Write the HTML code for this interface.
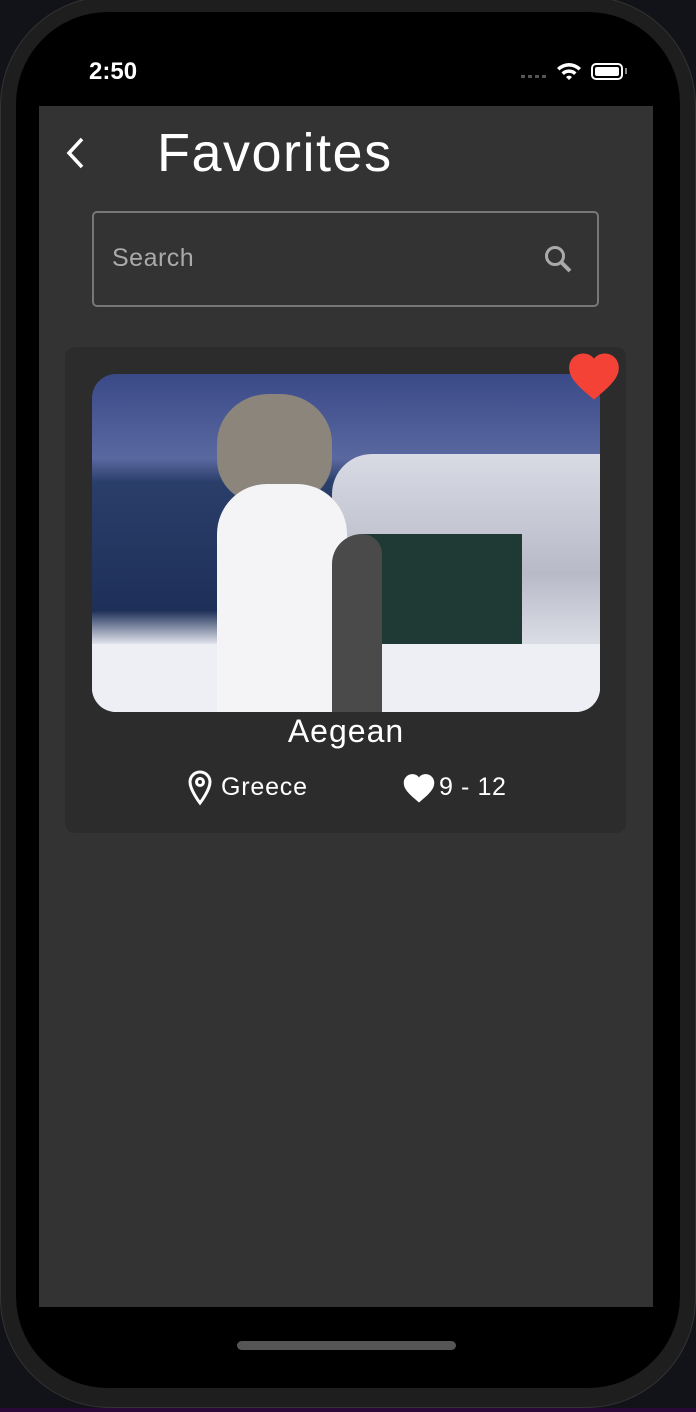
<!DOCTYPE html>
<html><head><style>
body{margin:0;width:696px;height:1412px;background:#111319;position:relative;overflow:hidden;font-family:"Liberation Sans",sans-serif}
.frame{position:absolute;left:0;top:-4px;width:696px;height:1412px;border-radius:110px;background:#1e1e1e;border:1px solid #333;box-sizing:border-box}
.screen{position:absolute;left:16px;top:12px;width:664px;height:1376px;border-radius:92px;background:#000}
.app{position:absolute;left:39px;top:106px;width:614px;height:1201px;background:#333}
.t{position:absolute;color:#fff}
</style></head><body>
<div style="position:absolute;left:0;bottom:0;width:696px;height:4px;background:#2a0838"></div>
<div class="frame"></div>
<div class="screen"></div>
<div class="t" style="left:89px;top:58px;font-size:24px;font-weight:bold">2:50</div>
<div style="position:absolute;left:521px;top:75px;width:26px;height:3px;background:repeating-linear-gradient(90deg,#555 0 4px,transparent 4px 7px)"></div>
<svg style="position:absolute;left:556px;top:60px" width="26" height="22" viewBox="0 0 26 22"><path d="M1 8a17 17 0 0 1 24 0l-2.5 2.5a13.5 13.5 0 0 0-19 0z M5.5 12.5a10.5 10.5 0 0 1 15 0L18 15a7 7 0 0 0-10 0z M10 17a4 4 0 0 1 6 0l-3 3z" fill="#fff"/></svg>
<div style="position:absolute;left:591px;top:63px;width:32px;height:17px;border:2px solid #fff;border-radius:5px;box-sizing:border-box;padding:2px"><div style="background:#fff;height:100%;border-radius:2px"></div></div>
<div style="position:absolute;left:625px;top:68px;width:2px;height:6px;background:#888"></div>
<div class="app">
<svg style="position:absolute;left:25px;top:30px" width="24" height="34" viewBox="0 0 24 34"><path d="M18 3L5 17l13 14" stroke="#fff" stroke-width="3.5" fill="none"/></svg>
<div class="t" style="left:118px;top:16px;font-size:54px;letter-spacing:1.5px">Favorites</div>
<div style="position:absolute;left:53px;top:105px;width:507px;height:96px;border:2px solid #777;border-radius:5px;box-sizing:border-box"></div>
<div class="t" style="left:73px;top:138px;font-size:25px;color:#aaa;letter-spacing:0.5px">Search</div>
<svg style="position:absolute;left:503px;top:137px" width="34" height="34" viewBox="0 0 34 34"><circle cx="13" cy="13" r="8.5" stroke="#aaa" stroke-width="3" fill="none"/><path d="M19 19l9 9" stroke="#aaa" stroke-width="4"/></svg>
<div style="position:absolute;left:26px;top:241px;width:561px;height:486px;background:#2c2c2c;border-radius:10px"></div>
<div style="position:absolute;left:53px;top:268px;width:508px;height:338px;border-radius:24px;overflow:hidden;background:linear-gradient(180deg,#3a4a88 0%,#5a68a0 25%,#2a3e6a 32%,#1e3058 70%,#e4e6ee 80%,#f2f2f6 100%)">
 <div style="position:absolute;left:240px;top:80px;width:280px;height:200px;background:linear-gradient(180deg,#d8dae4,#b8bac8 60%,#e0e2ea);border-radius:40px 0 0 0"></div>
 <div style="position:absolute;left:270px;top:160px;width:160px;height:110px;background:#1f3a34"></div>
 <div style="position:absolute;left:0;top:270px;width:508px;height:70px;background:#eeeff4"></div>
 <div style="position:absolute;left:125px;top:20px;width:115px;height:110px;background:#8b857c;border-radius:45% 45% 40% 40%"></div>
 <div style="position:absolute;left:125px;top:110px;width:130px;height:230px;background:#f4f4f6;border-radius:50px 50px 0 0"></div>
 <div style="position:absolute;left:240px;top:160px;width:50px;height:180px;background:#4a4a4a;border-radius:30px 20px 0 0"></div>
</div>
<svg style="position:absolute;left:526px;top:244px" width="58" height="52" viewBox="0 0 24 22"><path d="M12 21l-1.5-1.3C5 15 1.5 11.8 1.5 7.5 1.5 4 4.2 1.5 7.5 1.5c1.8 0 3.5.8 4.5 2.2 1-1.4 2.7-2.2 4.5-2.2 3.3 0 6 2.5 6 6 0 4.3-3.5 7.5-9 12.2z" fill="#f44336"/></svg>
<div class="t" style="left:0;width:614px;text-align:center;top:607px;font-size:32px;letter-spacing:1px">Aegean</div>
<svg style="position:absolute;left:148px;top:664px" width="26" height="36" viewBox="0 0 26 36"><path d="M13 2a10 10 0 0 0-10 10c0 8 10 21 10 21s10-13 10-21A10 10 0 0 0 13 2z" stroke="#fff" stroke-width="3" fill="none"/><circle cx="13" cy="12" r="3.5" stroke="#fff" stroke-width="3" fill="none"/></svg>
<div class="t" style="left:182px;top:667px;font-size:25px;letter-spacing:0.8px">Greece</div>
<svg style="position:absolute;left:362px;top:666px" width="36" height="32" viewBox="0 0 24 22"><path d="M12 21l-1.5-1.3C5 15 1.5 11.8 1.5 7.5 1.5 4 4.2 1.5 7.5 1.5c1.8 0 3.5.8 4.5 2.2 1-1.4 2.7-2.2 4.5-2.2 3.3 0 6 2.5 6 6 0 4.3-3.5 7.5-9 12.2z" fill="#fff"/></svg>
<div class="t" style="left:400px;top:667px;font-size:25px;letter-spacing:0.6px">9 - 12</div>
</div>
<div style="position:absolute;left:237px;top:1341px;width:219px;height:9px;border-radius:5px;background:#555"></div>
</body></html>
